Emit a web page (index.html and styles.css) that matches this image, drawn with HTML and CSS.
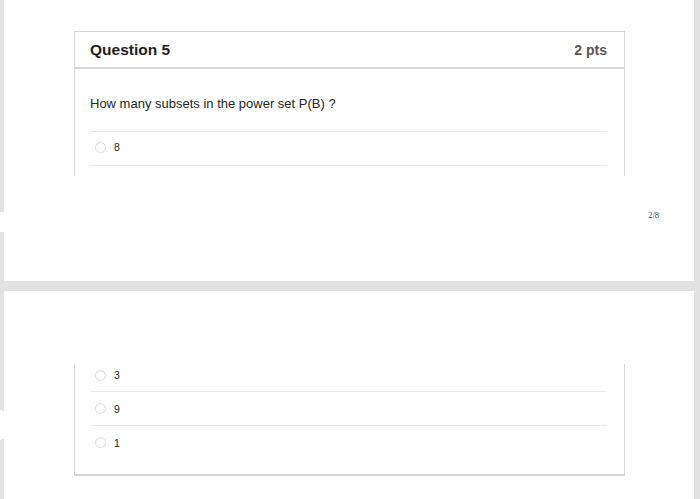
FILE: index.html
```html
<!DOCTYPE html>
<html>
<head>
<meta charset="utf-8">
<link rel="stylesheet" href="styles.css">
</head>
<body>
<div class="viewer">
  <section class="page page--first">
    <div class="card card--top">
      <div class="card-header">
        <span class="q-title">Question 5</span>
        <span class="q-pts">2 pts</span>
      </div>
      <div class="card-body">
        <p class="q-text">How many subsets in the power set P(B) ?</p>
        <ul class="options">
          <li class="option option--first"><span class="radio"></span><span class="opt-label">8</span></li>
        </ul>
      </div>
    </div>
    <div class="page-num">2/8</div>
  </section>
  <section class="page page--second">
    <div class="card card--bottom">
      <div class="card-body">
        <ul class="options options--cont">
          <li class="option option--cut"><span class="radio"></span><span class="opt-label">3</span></li>
          <li class="option"><span class="radio"></span><span class="opt-label">9</span></li>
          <li class="option option--last"><span class="radio"></span><span class="opt-label">1</span></li>
        </ul>
      </div>
    </div>
  </section>
</div>
</body>
</html>
```

FILE: styles.css
```css
* { box-sizing: border-box; }
html, body {
  margin: 0;
  padding: 0;
  height: 499px;
  overflow: hidden;
  background: #e2e2e2;
  font-family: "Liberation Sans", Arial, sans-serif;
}
.viewer {
  display: flex;
  flex-direction: column;
  gap: 10px;
}
.page {
  margin-left: 4px;
  width: 690px;
  background: #fff;
  display: flex;
  flex-direction: column;
  position: relative;
}
.page--first {
  height: 281px;
  padding-top: 31px;
}
.page--first::before {
  content: "";
  position: absolute;
  left: -4px;
  top: 212px;
  width: 4px;
  height: 20px;
  background: #fff;
}
.page--second {
  height: 208px;
  padding-top: 73px;
}
.page--second::before {
  content: "";
  position: absolute;
  left: -4px;
  top: 119px;
  width: 6px;
  height: 30px;
  border-radius: 0 6px 6px 0;
  background: #fff;
}
.card {
  margin-left: 70px;
  width: 551px;
  border: 1px solid #d6d6d6;
  background: #fff;
}
.card--top {
  height: 145px;
  border-bottom: none;
  overflow: hidden;
}
.card--bottom {
  border-top: none;
  border-bottom: 2px solid #d4d4d4;
}
.card-header {
  height: 37px;
  border-bottom: 2px solid #d8d8d8;
  display: flex;
  align-items: center;
  justify-content: space-between;
  padding: 0 17px 0 15px;
}
.q-title {
  font-size: 15.5px;
  font-weight: bold;
  color: #1e1e1e;
}
.q-pts {
  font-size: 14px;
  font-weight: bold;
  color: #555;
}
.card-body {
  padding: 0 17px 0 15px;
}
.q-text {
  margin: 27px 0 19px;
  font-size: 13px;
  line-height: 16px;
  color: #262626;
}
.options {
  list-style: none;
  margin: 0;
  padding: 0;
  border-top: 1px solid #e9e9e9;
}
.options--cont {
  border-top: none;
  padding-bottom: 15px;
}
.option {
  height: 34px;
  border-bottom: 1px solid #e9e9e9;
  display: flex;
  align-items: center;
  padding-left: 5px;
}
.option--first {
  padding-bottom: 3px;
}
.option--cut {
  height: 28px;
  padding-bottom: 5px;
}
.option--last {
  height: 33px;
  border-bottom: none;
}
.radio {
  width: 11px;
  height: 11px;
  border-radius: 50%;
  border: 1px solid #dcdcdc;
  box-shadow: inset 0 1px 1px rgba(0,0,0,0.06);
  background: #fff;
}
.opt-label {
  margin-left: 8px;
  font-size: 10.5px;
  color: #222;
}
.page-num {
  align-self: flex-end;
  margin-top: 34px;
  margin-right: 35px;
  font-family: "Liberation Serif", "Times New Roman", serif;
  font-size: 8.5px;
  color: #444;
}
```
